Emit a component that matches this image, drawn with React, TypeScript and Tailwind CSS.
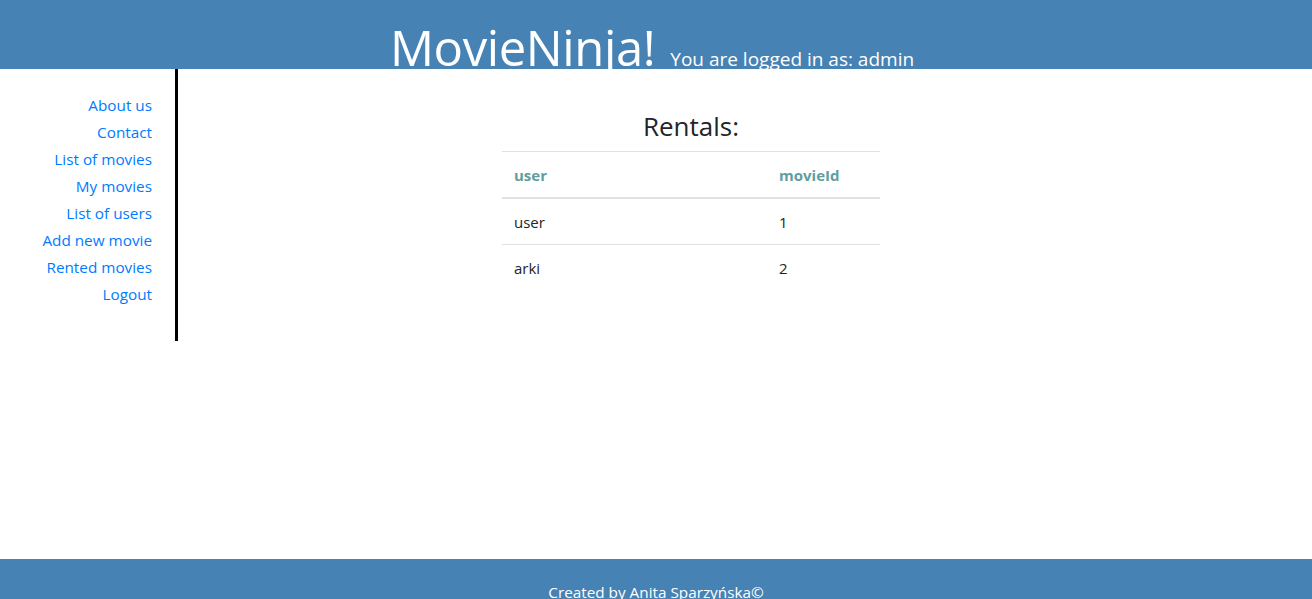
import React from "react";

const links = [
  "About us",
  "Contact",
  "List of movies",
  "My movies",
  "List of users",
  "Add new movie",
  "Rented movies",
  "Logout",
];

const rentals = [
  { user: "user", movieId: 1 },
  { user: "arki", movieId: 2 },
];

const App = () => {
  return (
    <div
      className="h-[599px] overflow-hidden flex flex-col bg-white text-[#212529]"
      style={{ fontFamily: '"Open Sans", "Noto Sans", sans-serif' }}
    >
      <header className="h-[69px] shrink-0 overflow-hidden bg-[#4682b4] text-white flex justify-center items-baseline gap-[15px] pr-[8px]">
        <h1 className="text-[49px] leading-[69px] pt-[13px] tracking-[-0.4px]">MovieNinja!</h1>
        <span className="text-[19px]">You are logged in as: admin</span>
      </header>

      <div className="flex flex-1 items-start">
        {/* sidebar */}
        <nav className="w-[178px] shrink-0 border-r-[3px] border-black pt-[23px] pb-[33px] pr-[23px] flex flex-col items-end">
          {links.map((l) => (
            <a key={l} href="#" className="text-[15.3px] leading-[27px] text-[#007bff]">
              {l}
            </a>
          ))}
        </nav>

        {/* content */}
        <main className="flex-1 pl-[324px] pt-[40px]">
          <div className="w-[378px]">
            <h2 className="text-center text-[26px] leading-[34px] mb-[8px]">Rentals:</h2>
            <table className="w-full text-[15px] text-left">
              <thead>
                <tr className="border-t border-[#dee2e6] border-b-2">
                  <th className="px-[12px] pt-[13px] pb-[12px] leading-[20px] font-bold text-[#5f9ea0] w-[265px]">user</th>
                  <th className="px-[12px] pt-[13px] pb-[12px] leading-[20px] font-bold text-[#5f9ea0]">movieId</th>
                </tr>
              </thead>
              <tbody>
                {rentals.map((r, i) => (
                  <tr key={i} className={i > 0 ? "border-t border-[#dee2e6]" : ""}>
                    <td className="px-[12px] pt-[13px] pb-[11px] leading-[21px]">{r.user}</td>
                    <td className="px-[12px] pt-[13px] pb-[11px] leading-[21px]">{r.movieId}</td>
                  </tr>
                ))}
              </tbody>
            </table>
          </div>
        </main>
      </div>

      <footer className="h-[40px] shrink-0 overflow-hidden bg-[#4682b4] text-white text-center text-[15.3px] pt-[22px] leading-[22px]">
        Created by Anita Sparzyńska©
      </footer>
    </div>
  );
};

export default App;
